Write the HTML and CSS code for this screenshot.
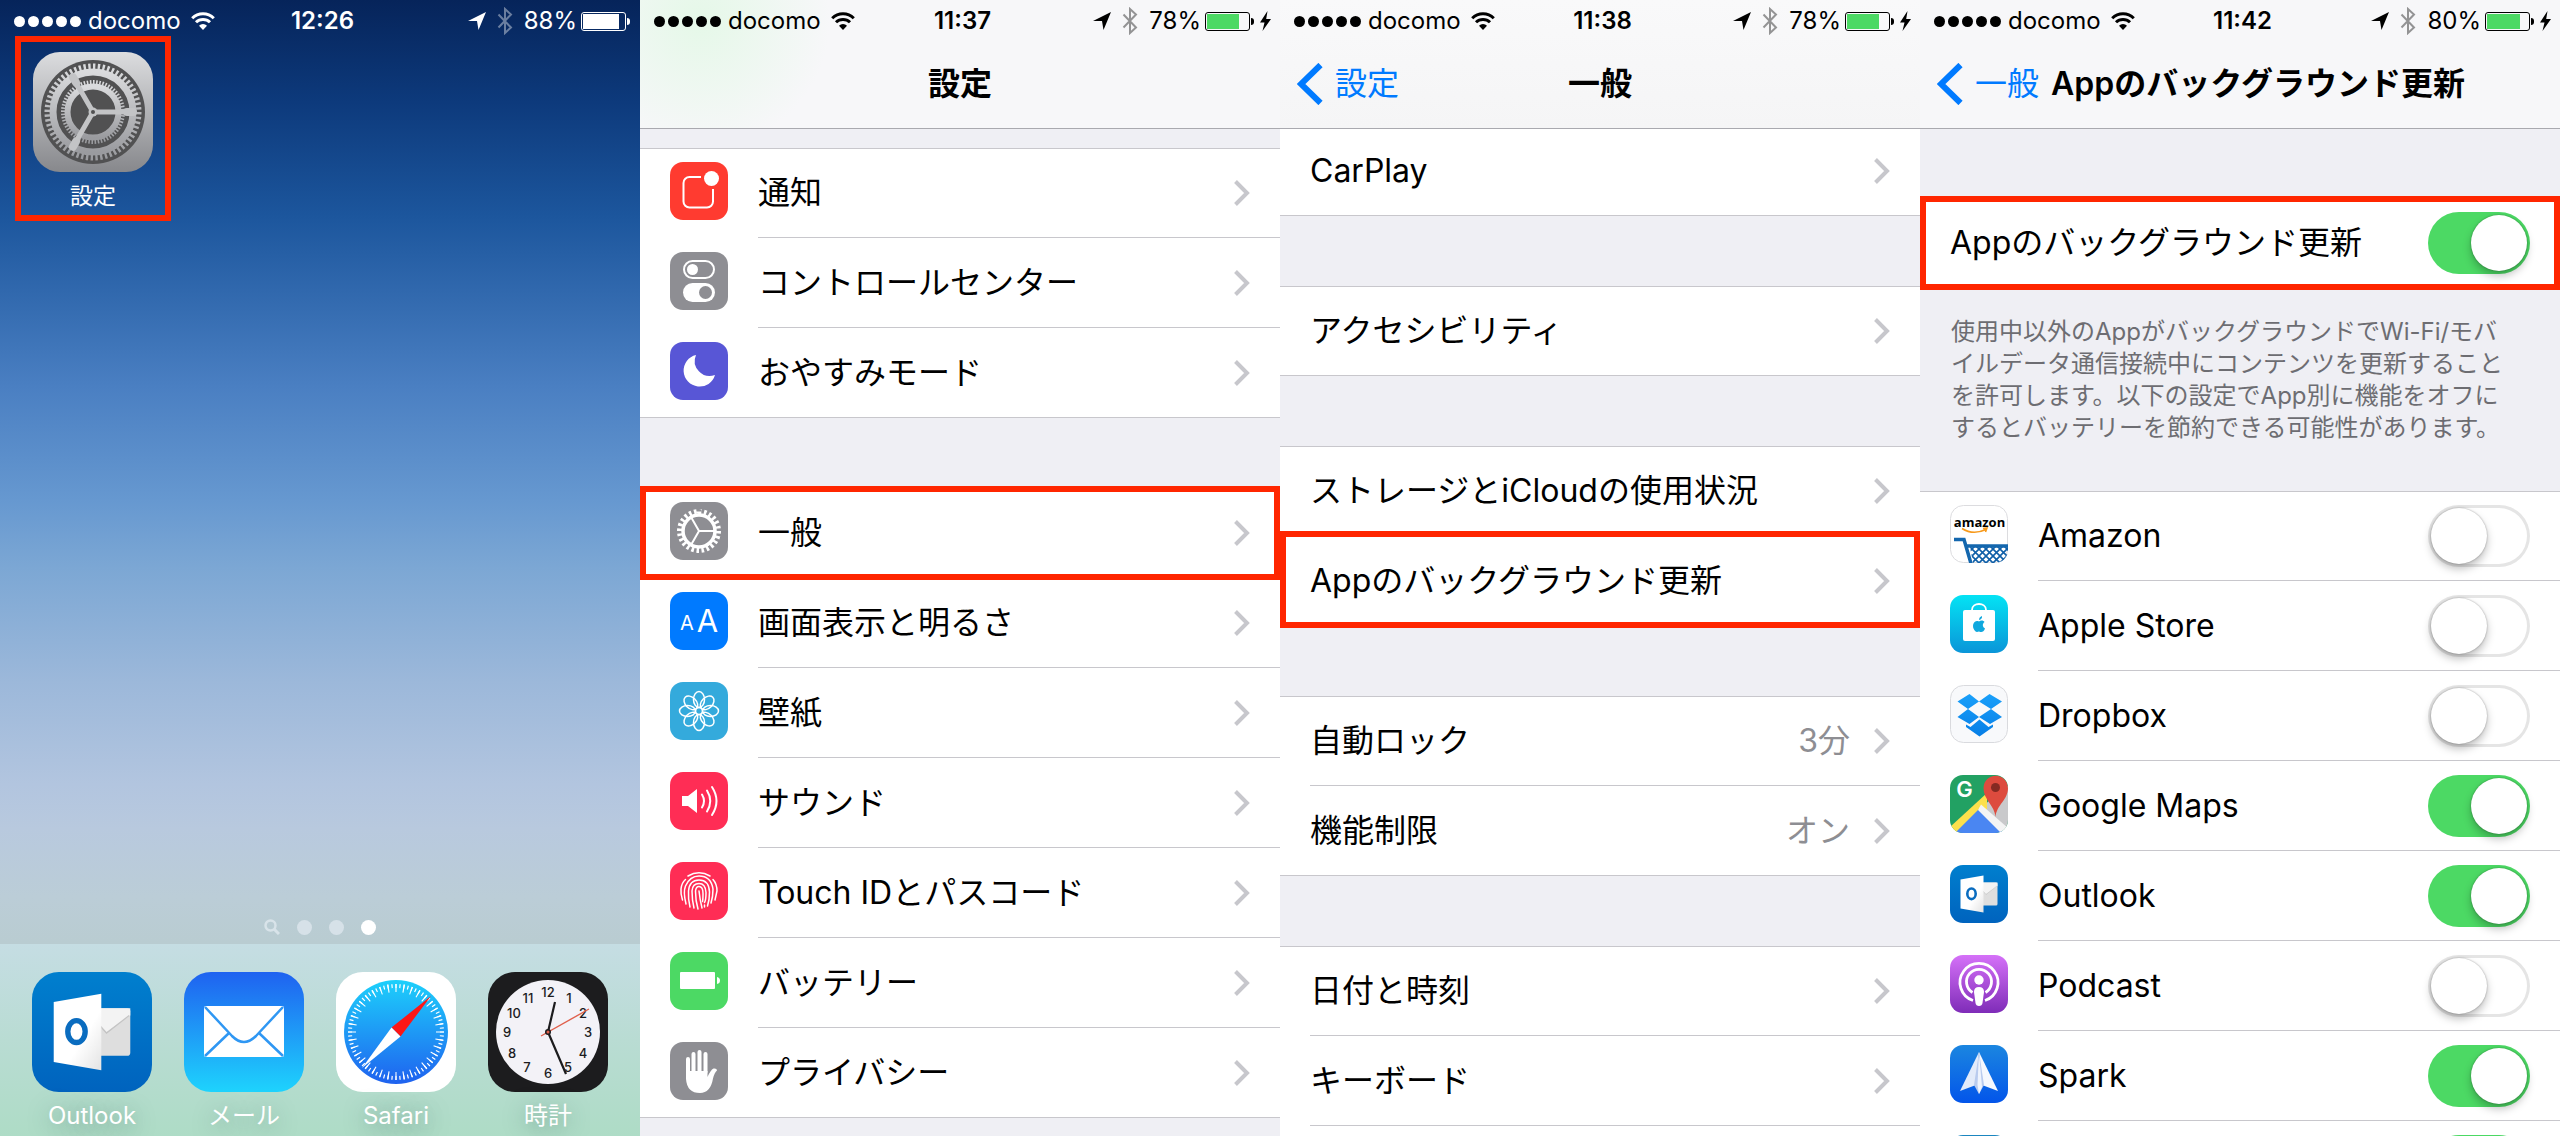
FILE: index.html
```html
<!DOCTYPE html>
<html lang="ja">
<head>
  <meta charset="UTF-8">
  <title>Appのバックグラウンド更新</title>
  <link rel="stylesheet" href="styles.css">
</head>
<body>
  <!-- shared icons -->
  <svg class="defs" aria-hidden="true">
    <defs>
      <linearGradient id="gSteel" x2="0" y2="1"><stop offset="0" stop-color="#dcdddf"/><stop offset="1" stop-color="#87888c"/></linearGradient>
      <linearGradient id="gGear" x2="0" y2="1"><stop offset="0" stop-color="#dadbdd"/><stop offset="1" stop-color="#9a9b9f"/></linearGradient>
      <linearGradient id="gOutlook" x2="0" y2="1"><stop offset="0" stop-color="#007fce"/><stop offset="1" stop-color="#0063be"/></linearGradient>
      <linearGradient id="gDoor" x2="1" y2="1"><stop offset=".6" stop-color="#fff"/><stop offset="1" stop-color="#e3e3e3"/></linearGradient>
      <linearGradient id="gMail" x2="0" y2="1"><stop offset="0" stop-color="#1f62f0"/><stop offset="1" stop-color="#1ed3fd"/></linearGradient>
      <linearGradient id="gCompass" x2="0" y2="1"><stop offset="0" stop-color="#1dd0fb"/><stop offset="1" stop-color="#1f62ef"/></linearGradient>
      <linearGradient id="gStore" x2="0" y2="1"><stop offset="0" stop-color="#04e3f4"/><stop offset="1" stop-color="#0a95d8"/></linearGradient>
      <linearGradient id="gBox" x2="0" y2="1"><stop offset="0" stop-color="#1aa0fa"/><stop offset="1" stop-color="#067ee6"/></linearGradient>
      <linearGradient id="gPod" x2="0" y2="1"><stop offset="0" stop-color="#d571f8"/><stop offset="1" stop-color="#7f2cb8"/></linearGradient>
      <linearGradient id="gSpark" x2="0" y2="1"><stop offset="0" stop-color="#1b86e0"/><stop offset="1" stop-color="#0355ea"/></linearGradient>
      <pattern id="mesh" width="7" height="7" patternUnits="userSpaceOnUse" patternTransform="translate(1 2)"><path d="M-1-1l9 9M8-1l-9 9" stroke="#0f5fa8" stroke-width="1.6"/></pattern>
      <clipPath id="tile"><rect width="58" height="58" rx="13"/></clipPath>
    </defs>

    <symbol id="wifi" viewBox="0 0 24 18">
      <path d="M1.2 6.2a15.4 15.4 0 0 1 21.6 0M5 10.3a10 10 0 0 1 14 0" fill="none" stroke="currentColor" stroke-width="3"/>
      <path d="M12 18l-4-4.3a5.8 5.8 0 0 1 8 0z" fill="currentColor"/>
    </symbol>
    <symbol id="arrow" viewBox="0 0 18 18"><path d="M18 0L0 9h9l1.500 9z" fill="currentColor"/></symbol>
    <symbol id="bluetooth" viewBox="0 0 16 28"><path d="M1.500 7.500l12.500 13L8 26V2l6 5.500-12.500 13" fill="none" stroke="currentColor" stroke-width="2"/></symbol>
    <symbol id="bolt" viewBox="0 0 11 20"><path d="M7.500 0L0 11.500h4.500L2.500 20 11 8H6.200z" fill="currentColor"/></symbol>
    <symbol id="back" viewBox="0 0 26 42"><path d="M23.500 2L4 21l19.500 19" fill="none" stroke="currentColor" stroke-width="6"/></symbol>
    <symbol id="chevron" viewBox="0 0 16 26"><path d="M1.500 1.500L13 13 1.500 24.500" fill="none" stroke="currentColor" stroke-width="4"/></symbol>
    <symbol id="outlook" viewBox="0 0 58 58">
      <rect width="58" height="58" rx="13" fill="url(#gOutlook)"/>
      <rect x="27" y="17.500" width="20.500" height="23" rx="1.500" fill="#dedede"/>
      <path d="M32 17.500h15.500v3.500L36 29l-4-4z" fill="#f3f3f3"/>
      <path d="M47 21L36 29.500 32 25" fill="none" stroke="#c4c4c4" stroke-width=".6"/>
      <path d="M10.500 14.500l23-4v37l-23-4z" fill="url(#gDoor)"/>
      <ellipse cx="21.500" cy="28.800" rx="4.200" ry="5.300" fill="none" stroke="#0a6cbf" stroke-width="2.600"/>
    </symbol>
  </svg>

  <main class="screens">

    <!-- home screen -->
    <section class="screen home">
      <div class="status">
        <span class="status-left"><span class="signal"><i></i><i></i><i></i><i></i><i></i></span>docomo<svg class="wifi"><use href="#wifi"/></svg></span>
        <b>12:26</b>
        <span class="status-right"><svg class="arrow"><use href="#arrow"/></svg><svg class="bluetooth"><use href="#bluetooth"/></svg>88%<span class="battery"><span style="width: 88%"></span></span></span>
      </div>

      <div class="apps">
        <a class="app highlight" href="#settings">
          <svg viewBox="0 0 120 120">
            <rect width="120" height="120" rx="27" fill="url(#gSteel)"/>
            <circle cx="60" cy="60" r="52" fill="#515152"/>
            <g fill="none" stroke="url(#gGear)">
              <circle cx="60" cy="60" r="45.500" stroke-width="6" pathLength="120" stroke-dasharray="1"/>
              <circle cx="60" cy="60" r="40" stroke-width="7"/>
              <circle cx="60" cy="60" r="30" stroke-width="4" pathLength="120" stroke-dasharray="1"/>
              <circle cx="60" cy="60" r="25.500" stroke-width="6"/>
            </g>
            <g stroke="#c3c4c6" stroke-width="5">
              <path d="M60 60h39M60 60L40.500 26.200M60 60L40.500 93.800"/>
              <path d="M94 60h6M43 30.500l-3-5.200M43 89.500l-3 5.200" stroke-width="8" stroke-linecap="round"/>
            </g>
            <circle cx="60" cy="60" r="4.500" fill="#c3c4c6"/><circle cx="60" cy="60" r="2" fill="#515152"/>
          </svg>
          設定
        </a>
      </div>

      <div class="pages">
        <svg viewBox="0 0 16 16"><circle cx="6.500" cy="6.500" r="5" fill="none" stroke="currentColor" stroke-width="2.500"/><path d="M10 10l5 5" stroke="currentColor" stroke-width="3"/></svg>
        <i></i><i></i><i class="current"></i>
      </div>

      <nav class="dock">
        <a class="app" href="#outlook-app"><svg><use href="#outlook"/></svg>Outlook</a>
        <a class="app" href="#mail">
          <svg viewBox="0 0 120 120">
            <rect width="120" height="120" rx="27" fill="url(#gMail)"/>
            <rect x="20" y="34" width="80" height="51" rx="2" fill="#fff"/>
            <path d="M21 35l27 29c8 8 16 8 24 0l27-29M21 84l24-23M99 84L75 61" fill="none" stroke="#2f97f3" stroke-width="2.500"/>
          </svg>
          メール
        </a>
        <a class="app" href="#safari">
          <svg viewBox="0 0 120 120">
            <rect width="120" height="120" rx="27" fill="#fff"/>
            <circle cx="60" cy="60" r="52" fill="url(#gCompass)"/>
            <circle cx="60" cy="60" r="46" fill="none" stroke="#fff" stroke-width="4" pathLength="144" stroke-dasharray=".6 1.400" stroke-dashoffset=".3"/>
            <circle cx="60" cy="60" r="44" fill="none" stroke="#fff" stroke-width="8" pathLength="144" stroke-dasharray=".6 3.400" stroke-dashoffset=".3"/>
            <path d="M95 24L55.500 55.500l9 9z" fill="#fc1616"/>
            <path d="M26 96l29.500-40.500 9 9z" fill="#fff"/>
          </svg>
          Safari
        </a>
        <a class="app" href="#clock">
          <svg viewBox="0 0 120 120">
            <rect width="120" height="120" rx="27" fill="#1c1c1e"/>
            <circle cx="60" cy="60" r="52" fill="#f3f2f7"/>
            <g class="clock-numbers">
              <text x="60" y="25">12</text><text x="81" y="31">1</text><text x="95" y="46">2</text><text x="100" y="65">3</text>
              <text x="95" y="86">4</text><text x="80" y="100">5</text><text x="60" y="106">6</text><text x="39" y="100">7</text>
              <text x="24" y="86">8</text><text x="19" y="65">9</text><text x="26" y="46">10</text><text x="40" y="31">11</text>
            </g>
            <path d="M60 60l7-30M60 60l18 42" stroke="#1c1c1e" stroke-width="2.200"/>
            <path d="M53 64l48-27" stroke="#e0604c" stroke-width="1.400"/>
            <circle cx="60" cy="60" r="3" fill="#1c1c1e"/><circle cx="60" cy="60" r="1.500" fill="#e0604c"/>
          </svg>
          時計
        </a>
      </nav>
    </section>

    <!-- settings -->
    <section class="screen settings" id="settings">
      <header class="bar">
        <div class="status">
          <span class="status-left"><span class="signal"><i></i><i></i><i></i><i></i><i></i></span>docomo<svg class="wifi"><use href="#wifi"/></svg></span>
          <b>11:37</b>
          <span class="status-right"><svg class="arrow"><use href="#arrow"/></svg><svg class="bluetooth"><use href="#bluetooth"/></svg>78%<span class="battery charging"><span style="width: 78%"></span></span><svg class="bolt"><use href="#bolt"/></svg></span>
        </div>
        <div class="title"><h1>設定</h1></div>
      </header>

      <ul class="group">
        <li><a class="row" href="#notifications">
          <svg class="icon" viewBox="0 0 58 58"><rect width="58" height="58" rx="13" fill="#ff3b30"/><path d="M31 15H19.500a6 6 0 0 0-6 6v18.500a6 6 0 0 0 6 6H37a6 6 0 0 0 6-6V27" fill="none" stroke="#fff" stroke-width="2"/><circle cx="41.500" cy="16.500" r="7.500" fill="#fff"/></svg>
          <span class="body">通知<svg class="chevron"><use href="#chevron"/></svg></span>
        </a></li>
        <li><a class="row" href="#control-center">
          <svg class="icon" viewBox="0 0 58 58"><rect width="58" height="58" rx="13" fill="#8e8e93"/><rect x="14" y="9" width="30" height="17" rx="8.500" fill="none" stroke="#fff" stroke-width="2"/><circle cx="22.500" cy="17.500" r="5.500" fill="#fff"/><rect x="13" y="31" width="32" height="19" rx="9.500" fill="#fff"/><circle cx="35.500" cy="40.500" r="6.500" fill="#8e8e93"/></svg>
          <span class="body">コントロールセンター<svg class="chevron"><use href="#chevron"/></svg></span>
        </a></li>
        <li><a class="row" href="#do-not-disturb">
          <svg class="icon" viewBox="0 0 58 58"><rect width="58" height="58" rx="13" fill="#5856d6"/><path d="M26 13a16 16 0 1 0 19 20A15 15 0 0 1 26 13z" fill="#fff"/></svg>
          <span class="body">おやすみモード<svg class="chevron"><use href="#chevron"/></svg></span>
        </a></li>
      </ul>

      <ul class="group">
        <li class="highlight"><a class="row" href="#general">
          <svg class="icon" viewBox="0 0 58 58"><rect width="58" height="58" rx="13" fill="#8e8e93"/><g fill="none" stroke="#fff"><circle cx="29" cy="29" r="19.500" stroke-width="5" pathLength="48" stroke-dasharray="1"/><circle cx="29" cy="29" r="16" stroke-width="3.500"/><path d="M29 29h16M29 29l-8-14M29 29l-8 14" stroke-width="2"/></g></svg>
          <span class="body">一般<svg class="chevron"><use href="#chevron"/></svg></span>
        </a></li>
        <li><a class="row" href="#display">
          <svg class="icon" viewBox="0 0 58 58"><rect width="58" height="58" rx="13" fill="#007aff"/><g class="icon-text"><text x="17" y="38" font-size="20">A</text><text x="37.500" y="40" font-size="31">A</text></g></svg>
          <span class="body">画面表示と明るさ<svg class="chevron"><use href="#chevron"/></svg></span>
        </a></li>
        <li><a class="row" href="#wallpaper">
          <svg class="icon" viewBox="0 0 58 58"><rect width="58" height="58" rx="13" fill="#34aadc"/><g transform="translate(29 29)" fill="none" stroke="#fff" stroke-width="1.500"><g id="petals"><ellipse cy="-11.500" rx="5.500" ry="8"/><ellipse cy="11.500" rx="5.500" ry="8"/><ellipse cx="-11.500" rx="8" ry="5.500"/><ellipse cx="11.500" rx="8" ry="5.500"/></g><use href="#petals" transform="rotate(45)"/><circle r="3.500"/></g></svg>
          <span class="body">壁紙<svg class="chevron"><use href="#chevron"/></svg></span>
        </a></li>
        <li><a class="row" href="#sound">
          <svg class="icon" viewBox="0 0 58 58"><rect width="58" height="58" rx="13" fill="#ff2d55"/><path d="M12 24h6l9-7v24l-9-7h-6z" fill="#fff"/><path d="M32 22.500q4 6.500 0 13M37 18.500q6.500 10.500 0 21M42 15q9 14 0 28" fill="none" stroke="#fff" stroke-width="2" stroke-linecap="round"/></svg>
          <span class="body">サウンド<svg class="chevron"><use href="#chevron"/></svg></span>
        </a></li>
        <li><a class="row" href="#touch-id">
          <svg class="icon" viewBox="0 0 58 58"><rect width="58" height="58" rx="13" fill="#ff2d55"/><g fill="none" stroke="#fff" stroke-width="1.500" stroke-linecap="round"><path d="M18 14q11-6.500 22 0"/><path d="M12.500 38q-2-6-1.500-11 .5-6 4.500-9.500"/><path d="M43 17.500q4 4.500 4 11.500l-2 9"/><path d="M16 42q-3-12-.5-18Q20 14 29 14q12 0 14 13 0 8-2 14"/><path d="M20 45q-2-8-1.500-16 1-11 10.500-11 10 0 10.500 12 0 8-2 14"/><path d="M24 46q-2-8-2-17 .5-7.500 7-7.500 6.500 0 7 9 0 8-1.500 10"/><path d="M28 47q-2.500-8-2.500-18 .5-4.500 3.500-4.500 4 0 4 7 0 6-.5 8"/><path d="M29 29q1 9 3 17M34.500 43v2"/></g></svg>
          <span class="body">Touch IDとパスコード<svg class="chevron"><use href="#chevron"/></svg></span>
        </a></li>
        <li><a class="row" href="#battery">
          <svg class="icon" viewBox="0 0 58 58"><rect width="58" height="58" rx="13" fill="#4cd964"/><rect x="10" y="20" width="35" height="17" rx="1" fill="#fff"/><path d="M47 25q3 .5 3 3.500t-3 3.500z" fill="#fff"/></svg>
          <span class="body">バッテリー<svg class="chevron"><use href="#chevron"/></svg></span>
        </a></li>
        <li><a class="row" href="#privacy">
          <svg class="icon" viewBox="0 0 58 58"><rect width="58" height="58" rx="13" fill="#8e8e93"/><path d="M18 17v15M23.500 12v18M29.500 10v20M35.500 12v18" stroke="#fff" stroke-width="4" stroke-linecap="round"/><path d="M16 29h21.500v6q3-7 6-8.500 3.500-.5 3.500 2-2.500 2-4 8-2.500 14.500-13 14.500Q17 51 16 37z" fill="#fff"/></svg>
          <span class="body">プライバシー<svg class="chevron"><use href="#chevron"/></svg></span>
        </a></li>
      </ul>
    </section>

    <!-- general -->
    <section class="screen general" id="general">
      <header class="bar">
        <div class="status">
          <span class="status-left"><span class="signal"><i></i><i></i><i></i><i></i><i></i></span>docomo<svg class="wifi"><use href="#wifi"/></svg></span>
          <b>11:38</b>
          <span class="status-right"><svg class="arrow"><use href="#arrow"/></svg><svg class="bluetooth"><use href="#bluetooth"/></svg>78%<span class="battery charging"><span style="width: 78%"></span></span><svg class="bolt"><use href="#bolt"/></svg></span>
        </div>
        <div class="title"><a class="back" href="#settings"><svg><use href="#back"/></svg>設定</a><h1>一般</h1></div>
      </header>

      <ul class="group">
        <li><a class="row" href="#carplay"><span class="body">CarPlay<svg class="chevron"><use href="#chevron"/></svg></span></a></li>
      </ul>
      <ul class="group">
        <li><a class="row" href="#accessibility"><span class="body">アクセシビリティ<svg class="chevron"><use href="#chevron"/></svg></span></a></li>
      </ul>
      <ul class="group">
        <li><a class="row" href="#storage"><span class="body">ストレージとiCloudの使用状況<svg class="chevron"><use href="#chevron"/></svg></span></a></li>
        <li class="highlight"><a class="row" href="#refresh"><span class="body">Appのバックグラウンド更新<svg class="chevron"><use href="#chevron"/></svg></span></a></li>
      </ul>
      <ul class="group">
        <li><a class="row" href="#auto-lock"><span class="body">自動ロック<span class="value">3分</span><svg class="chevron"><use href="#chevron"/></svg></span></a></li>
        <li><a class="row" href="#restrictions"><span class="body">機能制限<span class="value">オン</span><svg class="chevron"><use href="#chevron"/></svg></span></a></li>
      </ul>
      <ul class="group">
        <li><a class="row" href="#date"><span class="body">日付と時刻<svg class="chevron"><use href="#chevron"/></svg></span></a></li>
        <li><a class="row" href="#keyboard"><span class="body">キーボード<svg class="chevron"><use href="#chevron"/></svg></span></a></li>
        <li><span class="row"></span></li>
      </ul>
    </section>

    <!-- background app refresh -->
    <section class="screen refresh" id="refresh">
      <header class="bar">
        <div class="status">
          <span class="status-left"><span class="signal"><i></i><i></i><i></i><i></i><i></i></span>docomo<svg class="wifi"><use href="#wifi"/></svg></span>
          <b>11:42</b>
          <span class="status-right"><svg class="arrow"><use href="#arrow"/></svg><svg class="bluetooth"><use href="#bluetooth"/></svg>80%<span class="battery charging"><span style="width: 80%"></span></span><svg class="bolt"><use href="#bolt"/></svg></span>
        </div>
        <div class="title"><a class="back" href="#general"><svg><use href="#back"/></svg>一般</a><h1>Appのバックグラウンド更新</h1></div>
      </header>

      <ul class="group">
        <li class="highlight"><label class="row"><span class="body">Appのバックグラウンド更新<input class="switch" type="checkbox" checked></span></label></li>
      </ul>
      <p class="note">使用中以外のAppがバックグラウンドでWi-Fi/モバ<br>イルデータ通信接続中にコンテンツを更新すること<br>を許可します。以下の設定でApp別に機能をオフに<br>するとバッテリーを節約できる可能性があります。</p>
      <ul class="group">
        <li><label class="row">
          <svg class="icon" viewBox="0 0 58 58"><rect x=".5" y=".5" width="57" height="57" rx="13" fill="#fff" stroke="#dcdcdf"/><text class="amazon" x="29.500" y="22">amazon</text><path d="M12 23.500q11 7 24 1M33 23.500l4-.5-1.500 4" fill="none" stroke="#f79a1c" stroke-width="1.600"/><g clip-path="url(#tile)"><path d="M20 42h38v16H23z" fill="url(#mesh)"/><path d="M4 34.500h10l7 24M17 41h41" fill="none" stroke="#1467ae" stroke-width="3.500"/></g></svg>
          <span class="body">Amazon<input class="switch" type="checkbox"></span>
        </label></li>
        <li><label class="row">
          <svg class="icon" viewBox="0 0 58 58"><rect width="58" height="58" rx="13" fill="url(#gStore)"/><rect x="13" y="15" width="32" height="31" rx="2" fill="#fff"/><path d="M22 15c0-8 14-8 14 0" fill="none" stroke="#fff" stroke-width="1.800"/><path d="M29 26.500c2-1.500 4.500-1 5.500.5-2.500 2-2 5 .5 6.500-1.500 4-3.500 4-6 3-3 1-4 0-5.500-3-1.500-4 1-9 5.500-7zM29 25q0-3 3-4 .5 3-3 4z" fill="#10a8de"/></svg>
          <span class="body">Apple Store<input class="switch" type="checkbox"></span>
        </label></li>
        <li><label class="row">
          <svg class="icon" viewBox="0 0 58 58"><rect x=".5" y=".5" width="57" height="57" rx="13" fill="#f8f9fb" stroke="#d9dade"/><path d="M19.500 9l9.500 7.500-11 7.500-10.500-7.500zM39.500 9L52 16.500 41 24l-12-7.500zM18 24l11 8-9.500 7L7.500 32zM41 24l11 8-12 7-11-7zM29.500 34.500l9 7.500 4.500-2.500v2.500l-13.500 9.500L16 42v-2.500l4.500 2.500z" fill="url(#gBox)"/></svg>
          <span class="body">Dropbox<input class="switch" type="checkbox"></span>
        </label></li>
        <li><label class="row">
          <svg class="icon" viewBox="0 0 58 58"><g clip-path="url(#tile)"><path d="M0 0h58v58H0z" fill="#22a163"/><path d="M29 34l29-23v47z" fill="#c9c9cb"/><path d="M37 18v16L9 58H0v-6z" fill="#fce04c"/><path d="M29 34l26 24H5z" fill="#4a86f2"/><path d="M31 29.500L58 53v5h-7L28 35z" fill="#f4f4f4"/><path d="M45.500 42c-1-12-12-17-12-29a12 12 0 0 1 24.500 0c0 12-11.500 17-12.500 29z" fill="#dd4b3e"/><circle cx="45.500" cy="12.500" r="4.500" fill="#852a22"/></g><text class="maps-g" x="14.500" y="21.500">G</text></svg>
          <span class="body">Google Maps<input class="switch" type="checkbox" checked></span>
        </label></li>
        <li><label class="row">
          <svg class="icon"><use href="#outlook"/></svg>
          <span class="body">Outlook<input class="switch" type="checkbox" checked></span>
        </label></li>
        <li><label class="row">
          <svg class="icon" viewBox="0 0 58 58"><rect width="58" height="58" rx="13" fill="url(#gPod)"/><g fill="none" stroke="#fff" stroke-width="2.800"><path d="M23 45.500a19 19 0 1 1 12 0"/><path d="M22.500 37.500a12.500 12.500 0 1 1 13 0"/></g><circle cx="29" cy="25" r="4.700" fill="#fff"/><path d="M24 37q0-5 5-5t5 5l-1.500 11q-.5 3-3.500 3t-3.500-3z" fill="#fff"/></svg>
          <span class="body">Podcast<input class="switch" type="checkbox"></span>
        </label></li>
        <li><label class="row">
          <svg class="icon" viewBox="0 0 58 58"><rect width="58" height="58" rx="13" fill="url(#gSpark)"/><path d="M29 7L10 46l16-6z" fill="#e3ebfa"/><path d="M29 7l19 39-16-6z" fill="#f5f8fe"/><path d="M29 7l-5 33 5 9 5-9z" fill="#b9cbee"/><path d="M29 7l-1.500 33 1.500 9 3-7z" fill="#eef3fd"/></svg>
          <span class="body">Spark<input class="switch" type="checkbox" checked></span>
        </label></li>
        <li><label class="row">
          <svg class="icon" viewBox="0 0 58 58"><rect width="58" height="58" rx="13" fill="#1b86c0"/></svg>
          <span class="body"><input class="switch" type="checkbox" checked></span>
        </label></li>
      </ul>
    </section>

  </main>
</body>
</html>
```
FILE: styles.css
```css
* {
  box-sizing: border-box;
}
body {
  margin: 0;
  font-family: Inter, "Noto Sans CJK JP", sans-serif;
  font-size: 32px;
  line-height: 40px;
  color: #000;
}
a {
  color: inherit;
  text-decoration: none;
}
svg {
  display: block;
  flex: none;
}
.defs {
  position: absolute;
  width: 0;
  height: 0;
}
.screens {
  display: grid;
  grid-template-columns: repeat(4, minmax(0, 1fr));
  height: 100vh;
}
.screen {
  min-width: 0;
  overflow: hidden;
  background: #efeff4;
}

/* status bar */
.status {
  display: grid;
  grid-template-columns: 1fr auto 1fr;
  align-items: center;
  height: 40px;
  padding: 1px 9px 0 14px;
  font-size: 24px;
}
.status b {
  font-weight: 600;
}
.status-left, .status-right {
  display: flex;
  align-items: center;
}
.status-right {
  justify-content: flex-end;
}
.signal {
  display: flex;
  gap: 3px;
  margin-right: 7px;
}
.signal i {
  width: 11px;
  height: 11px;
  border-radius: 50%;
  background: currentColor;
}
.wifi {
  width: 24px;
  height: 18px;
  margin-left: 10px;
}
.arrow {
  width: 18px;
  height: 18px;
  margin-right: 11px;
}
.bluetooth {
  width: 16px;
  height: 28px;
  margin-right: 11px;
  opacity: 0.4;
}
.battery {
  position: relative;
  width: 45px;
  height: 19px;
  margin: 0 5px 0 4px;
  padding: 1px;
  border: 1px solid currentColor;
  border-radius: 3px;
}
.battery span {
  display: block;
  height: 100%;
  background: currentColor;
}
.battery::after {
  content: "";
  position: absolute;
  top: 5px;
  right: -5px;
  width: 3px;
  height: 7px;
  border-radius: 0 3px 3px 0;
  background: currentColor;
}
.battery.charging span {
  background: #4cd964;
}
.bolt {
  width: 11px;
  height: 20px;
  margin-left: 5px;
}

/* home */
.home {
  display: flex;
  flex-direction: column;
  color: #fff;
  background: linear-gradient(#06245a, #0d3a7c 9%, #1c569d 19%, #4a7fc2 34%, #6698d0 44%, #7ca7d4 50%, #9cb8da 60%, #b2c5df 69%, #b8c9de 73%, #bbcdd7 79%, #b9ccd1 83%);
}
.apps {
  flex: 1;
  padding: 12px 33px;
}
.app {
  display: flex;
  flex-direction: column;
  align-items: center;
  gap: 8px;
  width: 120px;
  font-size: 23px;
  line-height: 32px;
}
.app svg {
  width: 120px;
  height: 120px;
}
.pages {
  display: flex;
  justify-content: center;
  align-items: center;
  gap: 17px;
  height: 34px;
}
.pages svg {
  width: 16px;
  height: 16px;
  color: #d8e3e9;
}
.pages i {
  width: 15px;
  height: 15px;
  border-radius: 50%;
  background: #d6e1e8;
}
.pages .current {
  background: #fff;
}
.dock {
  display: flex;
  justify-content: space-between;
  height: 192px;
  padding: 28px 32px 0;
  background: linear-gradient(#c5dde3, #b9dcd3 50%, #aedcc6);
}
.dock .app {
  font-size: 24px;
  text-shadow: 0 4px 20px rgba(50, 100, 90, 0.5);
}
.clock-numbers {
  font-size: 13px;
  font-weight: 500;
  text-anchor: middle;
  text-shadow: none;
  fill: #1c1c1e;
}
.icon-text {
  text-anchor: middle;
  fill: #fff;
}
.amazon {
  font-family: "Open Sans", sans-serif;
  font-size: 13px;
  font-weight: bold;
  text-anchor: middle;
}
.maps-g {
  font-size: 22px;
  font-weight: 600;
  text-anchor: middle;
  fill: #fff;
}

/* navigation bar */
.bar {
  position: relative;
  z-index: 1;
  border-bottom: 1px solid #a9a9af;
  background: #f7f7f9;
}
.settings .bar {
  background: radial-gradient(circle at 60px 20px, #e5f8e8, #f7f7f9 130px);
}
.general .bar {
  background: linear-gradient(#f9f9fa, #f5f5f6);
}
.title {
  display: grid;
  grid-template-columns: 1fr auto 1fr;
  align-items: center;
  height: 88px;
  white-space: nowrap;
}
.title h1 {
  grid-column: 2;
  margin: 0;
  font-size: 32px;
  line-height: 40px;
  font-weight: 600;
}
.back {
  display: flex;
  align-items: center;
  gap: 12px;
  padding: 0 12px 0 17px;
  color: #007aff;
}
.back svg {
  width: 26px;
  height: 42px;
}

/* lists */
.group {
  margin: 70px 0 0;
  padding: 0;
  list-style: none;
}
.settings .bar + .group {
  margin-top: 19px;
}
.general .bar + .group {
  margin-top: -3px;
}
.refresh .bar + .group {
  margin-top: 69px;
}
.row {
  display: flex;
  height: 90px;
  padding-left: 30px;
  background: #fff;
}
.icon {
  width: 58px;
  height: 58px;
  margin: 14px 30px 0 0;
}
.body {
  display: flex;
  flex: 1;
  align-items: center;
  padding-right: 30px;
  border-bottom: 1px solid #c8c7cc;
  white-space: nowrap;
}
li:last-child .body {
  border-bottom: 0;
}
li:first-child .row {
  box-shadow: inset 0 1px #c8c7cc;
}
li:last-child .row {
  box-shadow: inset 0 -1px #c8c7cc;
}
li:only-child .row {
  box-shadow: inset 0 1px #c8c7cc, inset 0 -1px #c8c7cc;
}
.chevron {
  width: 16px;
  height: 26px;
  margin-left: auto;
  color: #c7c7cc;
}
.value {
  margin-left: auto;
  color: #8e8e93;
}
.value + .chevron {
  margin-left: 24px;
}
.switch {
  appearance: none;
  width: 102px;
  height: 62px;
  margin: 0 0 0 auto;
  padding: 3px;
  border-radius: 31px;
  background: #fff;
  box-shadow: inset 0 0 0 3px #e5e5e5;
}
.switch::before {
  content: "";
  display: block;
  width: 56px;
  height: 56px;
  border-radius: 50%;
  background: #fff;
  box-shadow: 0 0 2px rgba(0, 0, 0, 0.35), 0 5px 9px rgba(0, 0, 0, 0.25);
}
.switch:checked {
  background: #4cd964;
  box-shadow: none;
}
.switch:checked::before {
  margin-left: 40px;
}
.note {
  margin: 28px 0 -23px;
  padding: 0 31px;
  font-size: 24px;
  line-height: 32px;
  color: #6d6d72;
  white-space: nowrap;
}

/* red frames round the items to tap */
.highlight {
  position: relative;
}
.highlight::after {
  content: "";
  position: absolute;
  inset: -2px 0;
  border: 6px solid #ff2600;
  pointer-events: none;
}
.app.highlight::after {
  inset: -16px -18px -9px;
}
.general .highlight::after {
  inset: -5px 0 -2px;
}
```
